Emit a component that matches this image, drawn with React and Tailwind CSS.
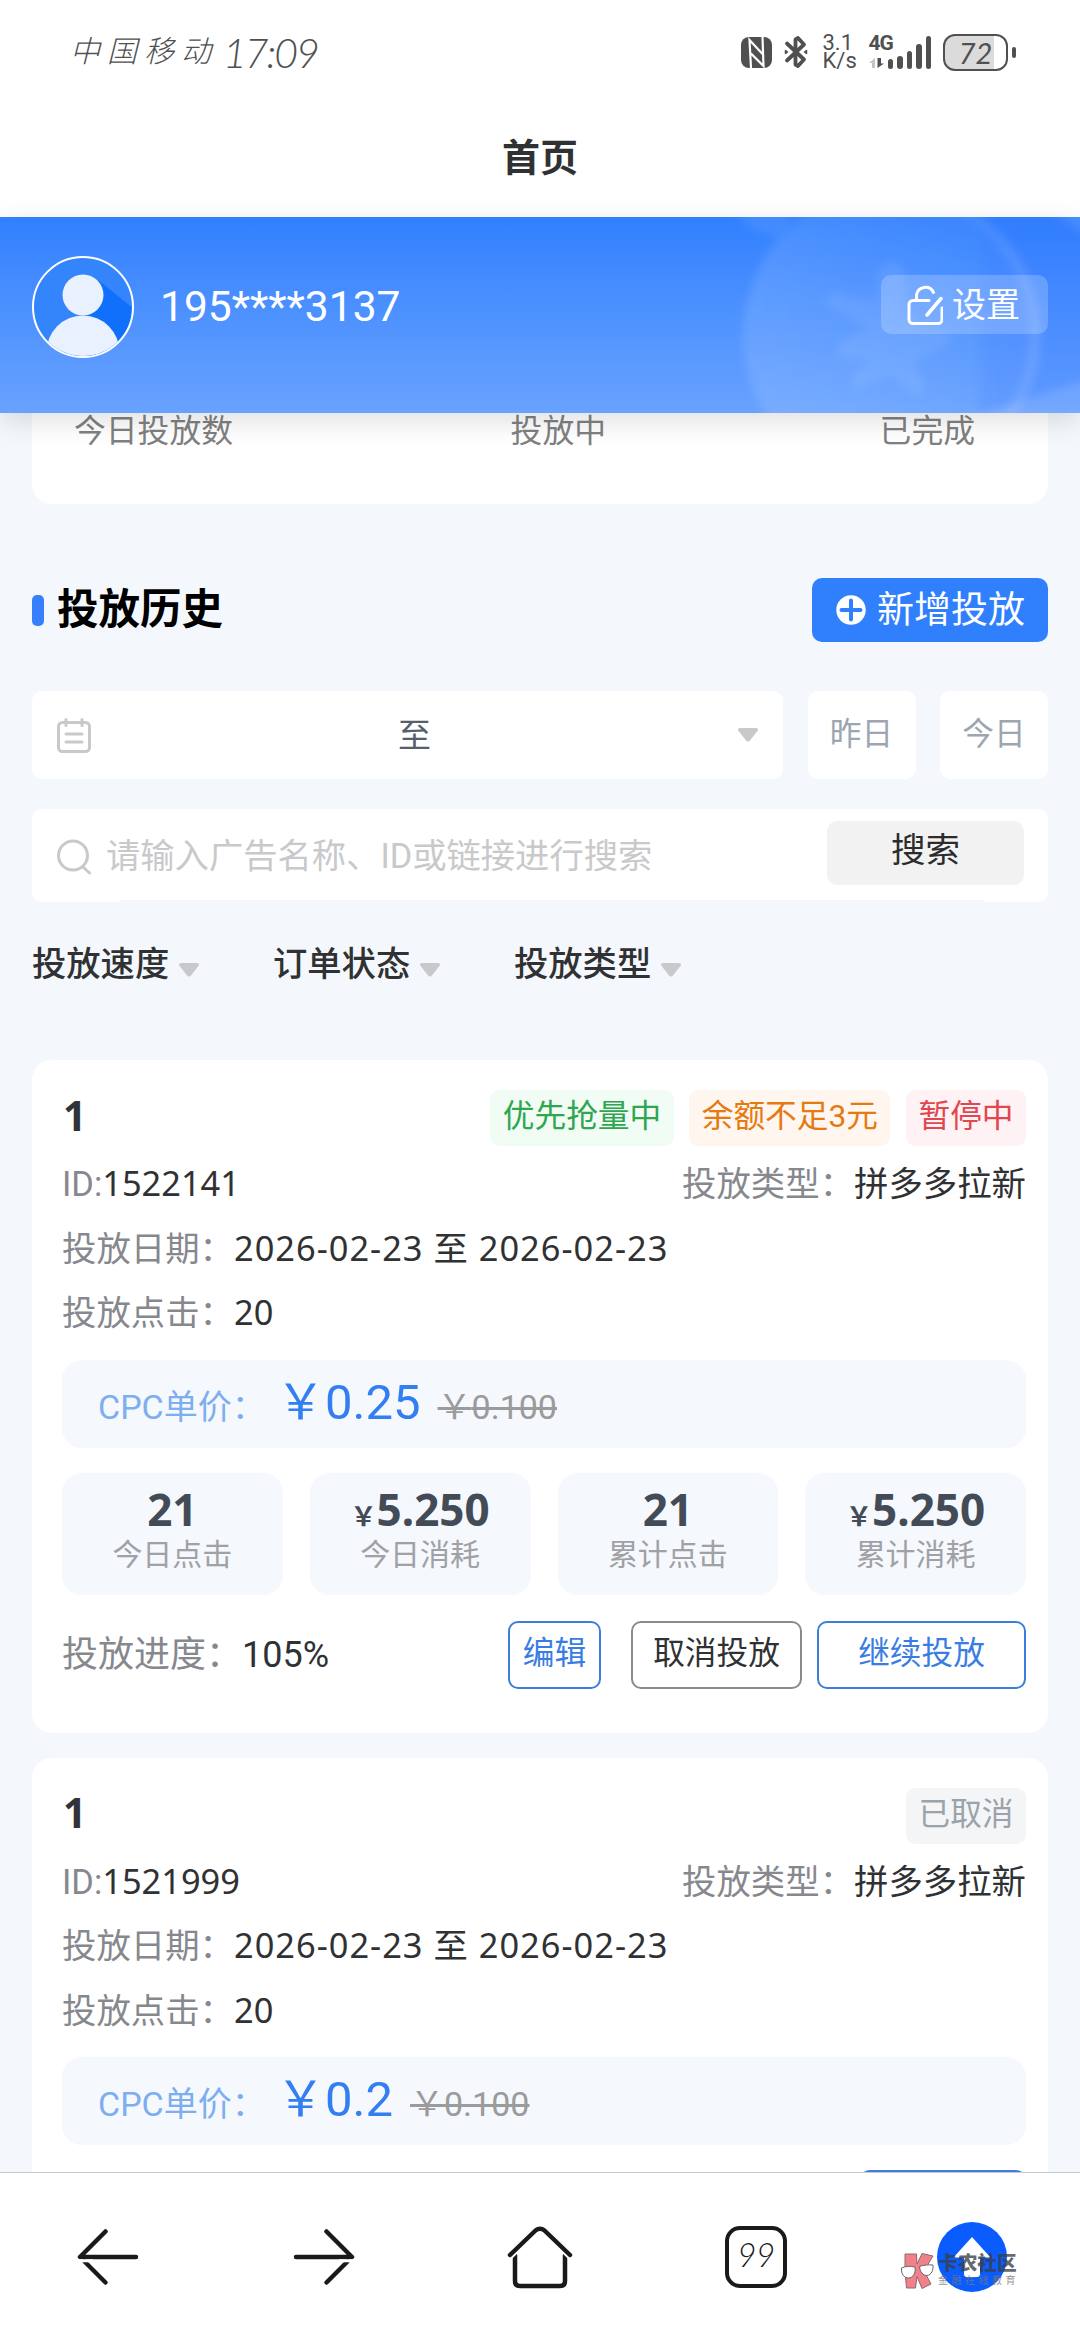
import clsx from 'clsx'

const campaigns = [
  {
    id: '1522141',
    name: '1',
    tags: [
      { text: '优先抢量中', style: 'bg-[#f1fcf4] text-[#2fa64f]' },
      { text: '余额不足3元', style: 'bg-[#fff6ef] text-[#e67a12]' },
      { text: '暂停中', style: 'bg-[#fff2f4] text-[#e0474e]' },
    ],
    type: '拼多多拉新',
    start: '2026-02-23',
    end: '2026-02-23',
    clicks: '20',
    price: '0.25',
    oldPrice: '0.100',
    stats: [
      { value: '21', label: '今日点击' },
      { value: '5.250', label: '今日消耗', money: true },
      { value: '21', label: '累计点击' },
      { value: '5.250', label: '累计消耗', money: true },
    ],
    progress: '105%',
  },
  {
    id: '1521999',
    name: '1',
    tags: [{ text: '已取消', style: 'bg-[#f4f5f7] text-[#9aa3ab]' }],
    type: '拼多多拉新',
    start: '2026-02-23',
    end: '2026-02-23',
    clicks: '20',
    price: '0.2',
    oldPrice: '0.100',
  },
]

function Caret({ className }) {
  return (
    <svg viewBox="0 0 20 14" className={clsx('h-[14px] w-[20px] shrink-0', className)}>
      <path d="M2 0h16c1.8 0 2.6 1.8 1.4 3.1L12 12.600c-1.100 1.300-2.900 1.300-4 0L.6 3.100C-.6 1.800.2 0 2 0z" fill="#c8c9cb" />
    </svg>
  )
}

function StatusBar() {
  return (
    <div className="flex h-[104px] items-center justify-between pr-[64px] pl-[70px] text-[#505050]">
      <div className="flex items-center font-light italic">
        <span className="text-[30px] leading-none tracking-[7px]">中国移动</span>
        <span className="ml-[5px] font-[Lato] text-[41px] leading-none tracking-[-2px]">17:09</span>
      </div>
      <div className="flex items-center">
        <svg viewBox="0 0 31 31" className="h-[31px] w-[31px]">
          <rect width="31" height="31" rx="8" fill="#505050" />
          <path d="M10 31L8.500 3l13.500 14.500M10 16.500L22.500 29 21.500 0" fill="none" stroke="#fff" strokeWidth="2.200" />
        </svg>
        <svg viewBox="0 0 24 34" className="ml-[12px] h-[34px] w-[24px]" fill="none" stroke="#505050" strokeWidth="3.800" strokeLinecap="round" strokeLinejoin="round">
          <path d="M3 8.500l17 16L14 31l-2.500-1.500v-25L14 3l6 6.500-17 16" />
          <path d="M1.500 15.500v3l2-1.500zM22.500 15.500v3l-2-1.500z" strokeWidth="1.500" fill="#505050" />
        </svg>
        <div className="ml-[15px] flex w-[36px] flex-col text-[22px] leading-[18px]">
          <span>3.1</span>
          <span>K/s</span>
        </div>
        <div className="ml-[10px] flex h-[34px] items-end">
          <div className="flex w-[19px] flex-col">
            <span className="text-[21px] leading-[17px] font-bold tracking-[-1px]">4G</span>
            <svg viewBox="0 0 16 12" className="mt-[5px] h-[12px] w-[16px]">
              <path d="M6 11V1L0 6h3v5z" fill="#c4c4c4" />
              <path d="M8.500 1v10L15 6.500h-3V1z" fill="#505050" />
            </svg>
          </div>
          <div className="flex items-end gap-[4px]">
            <div className="h-[10px] w-[5.500px] rounded-full bg-[#505050]" />
            <div className="h-[13px] w-[5.500px] rounded-full bg-[#505050]" />
            <div className="h-[18px] w-[5.500px] rounded-full bg-[#505050]" />
            <div className="h-[25px] w-[5.500px] rounded-full bg-[#505050]" />
            <div className="h-[33px] w-[5.500px] rounded-full bg-[#505050]" />
          </div>
        </div>
        <div className="ml-[12px] flex h-[37px] w-[65px] items-center justify-center overflow-hidden rounded-[12px] border-[2.500px] border-[#505050] bg-linear-to-r from-[#dbdbdb] from-80% to-white to-80%">
          <span className="font-[Lato] text-[29px] leading-none italic">72</span>
        </div>
        <div className="ml-[4px] h-[11px] w-[4px] rounded-full bg-[#505050]" />
      </div>
    </div>
  )
}

function HeaderBackdrop() {
  return (
    <svg viewBox="0 0 540 196" className="absolute top-0 right-0 h-[196px] w-[540px]">
      <defs>
        <filter id="soft" x="-20%" y="-20%" width="140%" height="140%">
          <feGaussianBlur stdDeviation="4" />
        </filter>
        <linearGradient id="disc" x1="0" x2="1" y1="0" y2="0">
          <stop offset="0" stopColor="#fff" stopOpacity=".12" />
          <stop offset=".9" stopColor="#fff" stopOpacity=".03" />
        </linearGradient>
        <linearGradient id="ring" x1="0" x2="1" y1="0" y2="0">
          <stop offset=".5" stopColor="#fff" stopOpacity="0" />
          <stop offset="1" stopColor="#fff" stopOpacity=".1" />
        </linearGradient>
      </defs>
      <rect x="440" width="130" height="196" fill="#2f6dff" opacity=".15" filter="url(#soft)" />
      <circle cx="352" cy="118" r="149" fill="url(#disc)" filter="url(#soft)" />
      <circle cx="352" cy="118" r="143" fill="none" stroke="url(#ring)" strokeWidth="11" filter="url(#soft)" />
      <path
        d="M338 56c4-14 24-14 27 0l3 48 34 8c12 2 12 14 0 20l-28 14 10 20c4 14-12 16-20 4l-10-12-34 12c-12 2-12-8-2-16l12-12c-30 4-40-6-26-20l24-10-38-22c-12-10 0-16 14-12l32 6z"
        fill="#fff"
        opacity=".07"
        filter="url(#soft)"
      />
      <path d="M200-10h60l-20 30c-18-4-34-8-40-20z" fill="#fff" opacity=".08" filter="url(#soft)" />
      <path d="M430 200l130-42v50H430z" fill="#fff" opacity=".13" filter="url(#soft)" />
      <path d="M506-10h50v36z" fill="#fff" opacity=".1" filter="url(#soft)" />
    </svg>
  )
}

function Avatar() {
  return (
    <svg viewBox="0 0 102 102" className="h-[102px] w-[102px]">
      <defs>
        <clipPath id="face">
          <circle cx="51" cy="51" r="49" />
        </clipPath>
      </defs>
      <circle cx="51" cy="51" r="50" fill="#3485fb" />
      <g clipPath="url(#face)">
        <path d="M66 24l40 32v50H60L51 60z" fill="#106ffb" />
        <circle cx="51" cy="39" r="20.500" fill="#e8f1fd" />
        <circle cx="51" cy="96" r="36.500" fill="#e8f1fd" />
      </g>
      <circle cx="51" cy="51" r="50" fill="none" stroke="#fff" strokeWidth="2" />
    </svg>
  )
}

function UserHeader() {
  return (
    <div className="relative z-10 h-[196px] shrink-0 bg-linear-to-b from-[#3080ff] to-[#68a2ff] shadow-[0_8px_26px_rgba(0,0,0,0.13)]">
      <HeaderBackdrop />
      <div className="relative flex items-center justify-between px-[32px] pt-[39px]">
        <div className="flex items-center">
          <Avatar />
          <span className="ml-[26px] text-[42.500px] leading-none text-white">195****3137</span>
        </div>
        <button className="mb-[5px] flex h-[59px] w-[167px] items-center rounded-[10px] bg-white/20 pl-[26px] text-white">
          <svg viewBox="0 0 36 42" className="h-[42px] w-[36px]" fill="none" stroke="#fff" strokeWidth="3" strokeLinecap="round" strokeLinejoin="round">
            <path d="M22 16.500H6a4 4 0 0 0-4 4v15a4 4 0 0 0 4 4h25a4 4 0 0 0 4-4V24" />
            <path d="M9.500 16V11a9 9 0 0 1 17-2.500" />
            <path d="M34 14.500L20 31" strokeWidth="3.500" />
          </svg>
          <span className="ml-[9px] text-[34px] leading-none">设置</span>
        </button>
      </div>
    </div>
  )
}

function SearchPanel() {
  return (
    <>
      <div className="mt-[74px] flex h-[64px] items-center justify-between">
        <div className="flex items-center">
          <div className="h-[31px] w-[12px] rounded-[5px] bg-[#3680fd]" />
          <h2 className="ml-[13px] text-[41.500px] leading-none font-bold text-black">投放历史</h2>
        </div>
        <button className="flex h-[64px] w-[236px] items-center rounded-[10px] bg-[#3080fe] pl-[24px] text-white">
          <svg viewBox="0 0 30 30" className="h-[30px] w-[30px]">
            <circle cx="15" cy="15" r="14.700" fill="#fff" />
            <path d="M15 5.500v19M5.500 15h19" stroke="#3080fe" strokeWidth="4" strokeLinecap="round" />
          </svg>
          <span className="ml-[11px] text-[37px] leading-none">新增投放</span>
        </button>
      </div>

      <div className="mt-[49px] flex h-[88px] justify-between">
        <div className="flex w-[751px] items-center rounded-[10px] bg-white pr-[25px] pl-[25px]">
          <svg viewBox="0 0 34 35" className="h-[35px] w-[34px]" fill="none" stroke="#c8c9cb" strokeWidth="3" strokeLinecap="round">
            <rect x="1.500" y="4.500" width="31" height="29" rx="4" />
            <path d="M9 1.500v6M25 1.500v6M9 16h16M9 24h16" />
          </svg>
          <span className="flex-1 pl-[16px] text-center text-[33px] leading-none text-[#56606a]">至</span>
          <Caret className="ml-[16px]" />
        </div>
        <button className="h-[88px] w-[108px] rounded-[10px] bg-white text-[31.700px] leading-none text-[#9ca6b0]">昨日</button>
        <button className="h-[88px] w-[108px] rounded-[10px] bg-white text-[31.700px] leading-none text-[#9ca6b0]">今日</button>
      </div>

      <div className="relative mt-[30px] flex h-[93px] items-center justify-between rounded-[10px] bg-white pr-[24px] pl-[25px]">
        <div className="flex items-center pt-[2px]">
          <svg viewBox="0 0 34 36" className="h-[36px] w-[34px]" fill="none" stroke="#c8c9cb" strokeWidth="3" strokeLinecap="round">
            <circle cx="16" cy="16.500" r="14.500" />
            <path d="M26 28l6.500 6" />
          </svg>
          <span className="ml-[15px] text-[34.300px] leading-none text-[#c8c9cb]">请输入广告名称、ID或链接进行搜索</span>
        </div>
        <button className="mb-[5px] h-[64px] w-[197px] rounded-[10px] bg-[#f2f2f2] pb-[5px] text-[34.500px] leading-none text-[#2c2c2c]">
          搜索
        </button>
        <div className="absolute bottom-0 left-[88px] h-[2px] w-[864px] bg-[#f5f7fa]" />
      </div>

      <div className="mt-[36px] flex h-[52px] items-center text-[34.300px] font-medium text-[#303133]">
        {['投放速度', '订单状态', '投放类型'].map((name) => (
          <div key={name} className="flex w-[241px] items-center">
            <span className="leading-none">{name}</span>
            <Caret className="mt-[12px] ml-[10px]" />
          </div>
        ))}
      </div>
    </>
  )
}

function Field({ label, children }) {
  return (
    <div className="h-[64.500px] text-[34.400px] leading-[64.500px] whitespace-nowrap text-[#303133]">
      <span className="text-[#86888d]">{label}</span>
      <span className="font-['Noto_Sans','Noto_Sans_CJK_SC',sans-serif] leading-none">{children}</span>
    </div>
  )
}

function CampaignCard({ item }) {
  return (
    <div className="mb-[25px] rounded-[20px] bg-white pt-[30px] pr-[22px] pb-[44px] pl-[30px]">
      <div className="flex h-[56px] items-center justify-between">
        <span className="pb-[6px] pl-[1px] font-['Noto_Sans'] text-[41px] leading-none font-bold text-[#303338]">{item.name}</span>
        <div className="flex gap-[15.500px]">
          {item.tags.map((tag) => (
            <span key={tag.text} className={clsx('h-[56px] rounded-[9px] px-[12.500px] text-[31.700px] leading-[54px]', tag.style)}>
              {tag.text}
            </span>
          ))}
        </div>
      </div>
      <div className="mt-[6px] flex justify-between">
        <Field label="ID:">{item.id}</Field>
        <Field label="投放类型：">{item.type}</Field>
      </div>
      <Field label="投放日期：">
        <span className="tracking-[1px]">
          {item.start} 至 {item.end}
        </span>
      </Field>
      <Field label="投放点击：">{item.clicks}</Field>

      <div className="mt-[14px] flex h-[88px] items-baseline rounded-[20px] bg-[#f5f8fc] pl-[36px] leading-[86px]">
        <span className="w-[178px] text-[34px] text-[#7caef0]">CPC单价：</span>
        <span className="text-[49px] text-[#337ef0]">￥{item.price}</span>
        <span className="ml-[17px] text-[34px] text-[#9b9b9b] line-through">￥{item.oldPrice}</span>
      </div>

      {item.stats ? (
        <>
          <div className="mt-[25px] grid grid-cols-4 gap-[27px]">
            {item.stats.map((stat) => (
              <div key={stat.label} className="flex h-[122px] flex-col items-center rounded-[20px] bg-[#f5f8fc] pt-[13px]">
                <div className="flex h-[46px] items-baseline font-['Noto_Sans','Noto_Sans_CJK_SC',sans-serif] font-bold text-[#434b57]">
                  {stat.money && <span className="text-[26px] leading-none">￥</span>}
                  <span className="text-[44px] leading-[46px]">{stat.value}</span>
                </div>
                <span className="text-[30px] leading-[46px] text-[#a0a1a4]">{stat.label}</span>
              </div>
            ))}
          </div>
          <div className="mt-[26px] flex h-[68px] items-center">
            <span className="text-[36px] leading-none text-[#86888d]">投放进度：</span>
            <span className="text-[36px] leading-none text-[#303133]">{item.progress}</span>
            <button className="ml-auto h-[68px] w-[93px] rounded-[10px] border-2 border-[#3c7fd8] pb-[2px] text-[31.700px] leading-none text-[#3a7de2]">
              编辑
            </button>
            <button className="ml-[30px] h-[68px] w-[171px] rounded-[10px] border-2 border-[#8a8b8d] pb-[2px] text-[31.700px] leading-none text-[#303133]">
              取消投放
            </button>
            <button className="ml-[15px] h-[68px] w-[209px] rounded-[10px] border-2 border-[#3c7fd8] pb-[2px] text-[31.700px] leading-none text-[#3a7de2]">
              继续投放
            </button>
          </div>
        </>
      ) : (
        <div className="mt-[25px] flex justify-end">
          <div className="h-[68px] w-[166px] rounded-[10px] bg-[#3f7ce0]" />
        </div>
      )}
    </div>
  )
}

function Watermark() {
  return (
    <div className="absolute top-[79px] left-[900px] flex">
      <svg viewBox="0 0 34 37" className="h-[37px] w-[34px]" stroke="#8c6a6e" strokeWidth="1">
        <path d="M5 2h11.500l.5 10 5-10.500L33 4l-9 15 7 13-9 4.500-5-12-1.500 11.500H6.500L5 20z" fill="#f0808a" />
        <path d="M1.500 16c4-2 9-2 13.500-1 1 6-2 11-6.500 11S1 22 1.500 16zM19.500 14.500c4-1.500 9-2 13.500-1.500.5 5-1.500 10-6 10.500-4 0-7-3.500-7.500-9z" fill="#fff" stroke="#666" />
      </svg>
      <div className="ml-[4px] flex flex-col text-[#3a3f48]/80">
        <span className="text-[19.700px] leading-[23px] font-black">卡农社区</span>
        <span className="text-[10px] leading-[12px] tracking-[3.500px] text-[#777]/80">金融在线教育</span>
      </div>
    </div>
  )
}

function BottomBar() {
  return (
    <div className="relative h-[168px] shrink-0 border-t border-[#c6c8ca] bg-white">
      <div className="grid h-full grid-cols-5 items-center justify-items-center">
        <svg viewBox="0 0 62 62" className="h-[62px] w-[62px]" fill="none" stroke="#1a1a1a" strokeWidth="4.500" strokeLinecap="round">
          <path d="M28.500 5.500L3 31h56" strokeLinejoin="round" />
          <path d="M7.500 35.500L28.500 56.500" />
          <path d="M2 34.800h14" stroke="#fff" strokeWidth="3" strokeLinecap="butt" />
        </svg>
        <svg viewBox="0 0 62 62" className="h-[62px] w-[62px]" fill="none" stroke="#1a1a1a" strokeWidth="4.500" strokeLinecap="round">
          <path d="M33.500 5.500L59 31H3" strokeLinejoin="round" />
          <path d="M54.500 35.500L33.500 56.500" />
          <path d="M46 34.800h14" stroke="#fff" strokeWidth="3" strokeLinecap="butt" />
        </svg>
        <svg viewBox="0 0 66 66" className="h-[66px] w-[66px]" fill="none" stroke="#1a1a1a" strokeWidth="4.500" strokeLinecap="round" strokeLinejoin="round">
          <path d="M8 31v26q0 5 5 5h40q5 0 5-5V31" />
          <path d="M3 31L28.500 6.500q4.500-3.500 9 0L63 31" stroke="#fff" strokeWidth="8" />
          <path d="M3 31L28.500 6.500q4.500-3.500 9 0L63 31" />
        </svg>
        <div className="flex h-[62px] w-[62px] items-center justify-center rounded-[15px] border-[4px] border-[#1a1a1a] pb-[4px]">
          <span className="font-[Lato] text-[33px] leading-none font-light tracking-[-0.500px] text-[#1a1a1a] italic">99</span>
        </div>
        <svg viewBox="0 0 70 70" className="h-[70px] w-[70px]">
          <circle cx="35" cy="35" r="35" fill="#0a5cff" />
          <path d="M35 15l18.500 20.500H43V52a3 3 0 0 1-3 3H30a3 3 0 0 1-3-3V35.500H16.500z" fill="#fff" />
        </svg>
      </div>
      <Watermark />
    </div>
  )
}

export default function App() {
  return (
    <div className="flex h-[2340px] w-[1080px] flex-col overflow-hidden bg-[#f4f8fd] font-['Roboto','Noto_Sans_CJK_SC',sans-serif]">
      <div className="h-[217px] shrink-0 bg-white">
        <StatusBar />
        <h1 className="pt-[34px] text-center text-[38px] leading-[40px] font-bold text-[#303133]">首页</h1>
      </div>
      <UserHeader />
      <div className="min-h-0 flex-1 overflow-hidden px-[32px]">
        <div className="flex h-[91px] justify-between rounded-b-[20px] bg-white pt-[1px] pr-[73px] pl-[42px] text-[31.800px] leading-[34px] text-[#808080]">
          <span>今日投放数</span>
          <span className="ml-[4px]">投放中</span>
          <span>已完成</span>
        </div>
        <SearchPanel />
        <div className="mt-[70px]">
          {campaigns.map((item) => (
            <CampaignCard key={item.id} item={item} />
          ))}
        </div>
      </div>
      <BottomBar />
    </div>
  )
}
